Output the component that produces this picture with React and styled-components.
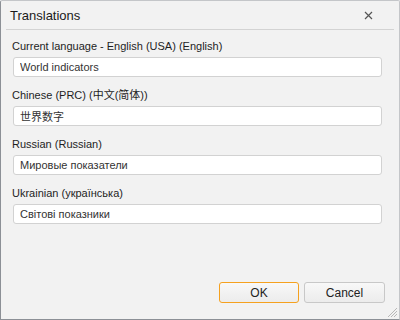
import React from 'react'
import styled, { createGlobalStyle } from 'styled-components'

const Global = createGlobalStyle`
  html, body { margin: 0; padding: 0; background: #ffffff; }
  body { font-family: 'Liberation Sans', Arial, 'Noto Sans CJK SC', sans-serif; }
`

export const Window = styled.div`
  position: relative;
  box-sizing: border-box;
  width: 400px;
  height: 320px;
  background: #f2f2f2;
  border: 1px solid #c4c6c9;
  border-left-color: #8c9096;
  border-bottom-color: #8c9096;
  border-radius: 2px 2px 0 0;
  display: flex;
  flex-direction: column;
`

export const Header = styled.div`
  height: 28px;
  margin: 0 5px;
  padding: 0 4px;
  display: flex;
  align-items: center;
  justify-content: space-between;
  border-bottom: 1px solid #d3d3d3;
`

export const Title = styled.div`
  font-size: 13px;
  color: #1a1a1a;
`

export const Close = styled.button`
  width: 16px;
  height: 16px;
  margin-right: 14px;
  padding: 0;
  border: none;
  background: none;
  display: flex;
  align-items: center;
  justify-content: center;
`

export const Body = styled.div`
  flex: 1;
  padding: 9px 18px 0 11px;
  display: flex;
  flex-direction: column;
`

export const Field = styled.div`
  display: flex;
  flex-direction: column;
  margin-bottom: 11px;
`

export const Label = styled.label`
  font-size: 11px;
  line-height: 14px;
  color: #1e1e1e;
  margin-bottom: 4px;
`

export const Input = styled.input`
  box-sizing: border-box;
  height: 20px;
  width: 369px;
  margin-left: 1px;
  padding: 0 6px;
  border: 1px solid #d2d2d2;
  border-radius: 3px;
  background: #ffffff;
  font-family: 'Liberation Sans', Arial, 'Noto Sans CJK SC', sans-serif;
  font-size: 11px;
  color: #333333;
  outline: none;
`

export const Footer = styled.div`
  display: flex;
  justify-content: flex-end;
  gap: 5px;
  padding: 0 14px 16px 0;
`

export const Button = styled.button`
  box-sizing: border-box;
  width: ${(p) => (p.$primary ? '80px' : '81px')};
  height: 21px;
  border-radius: 3px;
  border: 1px solid ${(p) => (p.$primary ? '#f5a11f' : '#c8c8c8')};
  background: linear-gradient(#f8f8f8, #ececec);
  font-family: 'Liberation Sans', Arial, sans-serif;
  font-size: 12px;
  color: #222;
  padding: 0;
`

export const Grip = styled.svg`
  position: absolute;
  right: 1px;
  bottom: 1px;
`

const fields = [
  { label: 'Current language - English (USA) (English)', value: 'World indicators' },
  { label: 'Chinese (PRC) (中文(简体))', value: '世界数字' },
  { label: 'Russian (Russian)', value: 'Мировые показатели' },
  { label: 'Ukrainian (українська)', value: 'Світові показники' },
]

function App() {
  return (
    <>
      <Global />
      <Window>
        <Header>
          <Title>Translations</Title>
          <Close>
            <svg width="9" height="9" viewBox="0 0 9 9">
              <path d="M1 1 L8 8 M8 1 L1 8" stroke="#555" strokeWidth="1.2" />
            </svg>
          </Close>
        </Header>
        <Body>
          {fields.map((f) => (
            <Field key={f.label}>
              <Label>{f.label}</Label>
              <Input defaultValue={f.value} />
            </Field>
          ))}
        </Body>
        <Footer>
          <Button $primary>OK</Button>
          <Button>Cancel</Button>
        </Footer>
        <Grip width="12" height="12" viewBox="0 0 12 12">
          <path d="M11 2 L2 11 M11 5 L5 11 M11 8 L8 11" stroke="#b8b8b8" strokeWidth="1" />
        </Grip>
      </Window>
    </>
  )
}

export default App
